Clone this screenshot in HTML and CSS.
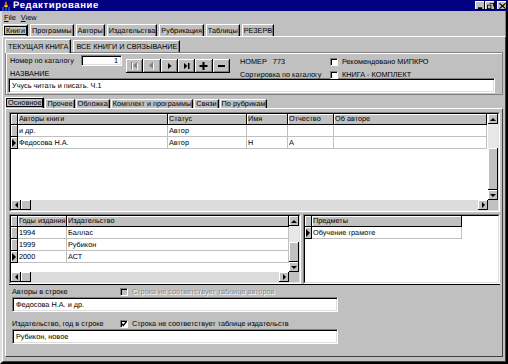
FILE: index.html
```html
<!DOCTYPE html>
<html lang="ru">
<head>
    <meta charset="UTF-8">
    <title>Редактирование</title>
    <link rel="stylesheet" href="styles.css">
</head>
<body>
<div class="window">
    <!-- заголовок окна -->
    <div class="titlebar">
        <svg class="app-icon" viewBox="0 0 10 10">
            <path d="M1 10V6h2v4zM4 10V5h2v5zM7 10V6h2v4z" fill="#2040c0"/>
            <path d="M3 6l2-6 2 6z" fill="#ffc800"/>
            <path d="M4 4l1-3 1 3z" fill="#e02000"/>
        </svg>
        <span class="title">Редактирование</span>
        <div class="caption-btns">
            <span class="cbtn"><svg viewBox="0 0 8 7"><path d="M1 5h5v2H1z"/></svg></span>
            <span class="cbtn"><svg viewBox="0 0 8 7"><path d="M3 0h5v4H7V1H3zM0 2h5v5H0zm1 1v3h3V3z" fill-rule="evenodd"/></svg></span>
            <span class="cbtn close"><svg viewBox="0 0 8 7"><path d="M1 0l3 2.5L7 0l1 1-3 2.5L8 6l-1 1-3-2.5L1 7 0 6l3-2.5L0 1z"/></svg></span>
        </div>
    </div>

    <div class="frame">
        <div class="menubar">
            <span><u>F</u>ile</span>
            <span><u>V</u>iew</span>
        </div>

        <div class="tabs tabs-main">
            <span class="tab active"><span class="focus">Книги</span></span>
            <span class="tab">Программы</span>
            <span class="tab">Авторы</span>
            <span class="tab">Издательства</span>
            <span class="tab">Рубрикация</span>
            <span class="tab">Таблицы</span>
            <span class="tab">РЕЗЕРВ</span>
        </div>

        <div class="sheet sheet-main">
            <div class="tabs tabs-sub">
                <span class="tab active">ТЕКУЩАЯ КНИГА</span>
                <span class="tab">ВСЕ КНИГИ И СВЯЗЫВАНИЕ</span>
            </div>

            <!-- карточка книги -->
            <div class="info">
                <div class="info-top">
                    <div class="catalog">
                        <div class="catalog-line">
                            <span class="lbl">Номер по каталогу</span>
                            <span class="edit num-edit">1</span>
                        </div>
                        <div class="caps-lbl">НАЗВАНИЕ</div>
                    </div>
                    <div class="nav">
                        <span class="nbtn"><svg viewBox="0 0 9 8"><path d="M2 1h1v7H2zM8 1v7L4 4.5z" fill="#fff"/><path d="M1 0h1v7H1zM7 0v7L3 3.5z" fill="#808080"/></svg></span>
                        <span class="nbtn"><svg viewBox="0 0 9 8"><path d="M7 1v7L3 4.5z" fill="#fff"/><path d="M6 0v7L2 3.5z" fill="#808080"/></svg></span>
                        <span class="nbtn"><svg viewBox="0 0 9 8"><path d="M3 1v6l3.5-3z"/></svg></span>
                        <span class="nbtn"><svg viewBox="0 0 9 8"><path d="M2 1v6l3.5-3zM6 1h1.5v6H6z"/></svg></span>
                        <span class="nbtn"><svg viewBox="0 0 9 8"><path d="M3.5 0h2v3H8.5v2h-3v3h-2V5h-3V3h3z"/></svg></span>
                        <span class="nbtn"><svg viewBox="0 0 9 8"><path d="M1 3h7v2H1z"/></svg></span>
                    </div>
                    <div class="number">
                        <div>НОМЕР&nbsp;&nbsp;&nbsp;773</div>
                        <div>Сортировка по каталогу</div>
                    </div>
                    <div class="checks">
                        <label class="check"><span class="box"></span>Рекомендовано МИПКРО</label>
                        <label class="check"><span class="box"></span>КНИГА - КОМПЛЕКТ</label>
                    </div>
                </div>
                <div class="edit name-edit">Учусь читать и писать. Ч.1</div>
            </div>

            <div class="tabs tabs-inner">
                <span class="tab active"><span class="focus">Основное</span></span>
                <span class="tab">Прочее</span>
                <span class="tab">Обложка</span>
                <span class="tab">Комплект и программы</span>
                <span class="tab">Связи</span>
                <span class="tab">По рубрикам</span>
            </div>

            <div class="sheet sheet-inner">
                <!-- авторы -->
                <div class="grid authors">
                    <div class="grid-in">
                        <div class="grid-main">
                            <div class="cells">
                                <div class="row head"><span class="ind"></span><span>Авторы книги</span><span>Статус</span><span>Имя</span><span>Отчество</span><span>Об авторе</span></div>
                                <div class="row"><span class="ind"></span><span>и др.</span><span>Автор</span><span></span><span></span><span></span></div>
                                <div class="row"><span class="ind cur"></span><span>Федосова Н.А.</span><span>Автор</span><span>Н</span><span>А</span><span></span></div>
                            </div>
                            <div class="vscroll">
                                <span class="sbtn"><i class="arr up"></i></span>
                                <span class="track"></span>
                                <span class="thumb"></span>
                                <span class="sbtn"><i class="arr down"></i></span>
                            </div>
                        </div>
                        <div class="hscroll">
                            <span class="sbtn"><i class="arr left"></i></span>
                            <span class="thumb"></span>
                            <span class="track"></span>
                            <span class="sbtn"><i class="arr right"></i></span>
                            <span class="corner"></span>
                        </div>
                    </div>
                </div>

                <div class="split">
                    <!-- издания -->
                    <div class="grid years">
                        <div class="grid-in">
                            <div class="grid-main">
                                <div class="cells">
                                    <div class="row head"><span class="ind"></span><span>Годы издания</span><span>Издательство</span></div>
                                    <div class="row"><span class="ind"></span><span>1994</span><span>Баллас</span></div>
                                    <div class="row"><span class="ind"></span><span>1999</span><span>Рубикон</span></div>
                                    <div class="row"><span class="ind cur"></span><span>2000</span><span>АСТ</span></div>
                                </div>
                                <div class="vscroll">
                                    <span class="sbtn"><i class="arr up"></i></span>
                                    <span class="track short"></span>
                                    <span class="thumb"></span>
                                    <span class="sbtn"><i class="arr down"></i></span>
                                </div>
                            </div>
                            <div class="hscroll">
                                <span class="sbtn"><i class="arr left"></i></span>
                                <span class="thumb"></span>
                                <span class="track"></span>
                                <span class="sbtn"><i class="arr right"></i></span>
                                <span class="corner"></span>
                            </div>
                        </div>
                    </div>

                    <!-- рубрики -->
                    <div class="grid subjects">
                        <div class="grid-in">
                            <div class="cells">
                                <div class="row head"><span class="ind"></span><span>Предметы</span></div>
                                <div class="row"><span class="ind cur"></span><span>Обучение грамоте</span></div>
                            </div>
                        </div>
                    </div>
                </div>

                <div class="strings">
                    <div class="field-head">
                        <span class="lbl">Авторы в строке</span>
                        <label class="check off"><span class="box"></span>Строка не соответствует таблице авторов</label>
                    </div>
                    <div class="edit field-edit">Федосова Н.А. и др.</div>
                    <div class="field-head second">
                        <span class="lbl">Издательство, год в строке</span>
                        <label class="check"><span class="box"><svg viewBox="0 0 6 6"><path d="M0.5 2.5l1.8 2 3.2-4" fill="none" stroke="#000" stroke-width="1.4"/></svg></span>Строка не соответствует таблице издательств</label>
                    </div>
                    <div class="edit field-edit">Рубикон, новое</div>
                </div>
            </div>
        </div>
    </div>
</div>
</body>
</html>
```

FILE: styles.css
```css
* { box-sizing: border-box; }
body { margin: 0; background: #c0c0c0; color: #000; font: 7.3px "Liberation Sans", Arial, sans-serif; text-rendering: geometricPrecision; }

.window { width: 508px; height: 364px; display: flex; flex-direction: column; overflow: hidden; background: #c0c0c0; }

/* title bar */
.titlebar { flex: none; height: 11px; display: flex; align-items: center; background: #000080; color: #fff; }
.app-icon { width: 10px; height: 10px; margin: 0 2px 0 1px; }
.title { flex: 1; font-size: 9.5px; font-weight: bold; letter-spacing: 0.6px; line-height: 11px; }
.caption-btns { display: flex; margin-right: 1px; }
.cbtn { width: 10px; height: 9px; display: flex; align-items: center; justify-content: center; background: #c0c0c0; box-shadow: inset -1px -1px #000, inset 1px 1px #fff; }
.cbtn svg { width: 7px; height: 6px; }
.cbtn.close { margin-left: 2px; }

.frame { flex: 1; display: flex; flex-direction: column; min-height: 0; border: 2px solid #dfdfdf; border-top: 0; border-right-color: #000; border-bottom-color: #000; box-shadow: inset -1px -1px #808080; }

.menubar { flex: none; height: 12px; display: flex; align-items: center; gap: 5px; padding-left: 2px; }

/* tabs */
.tabs { flex: none; display: flex; align-items: flex-end; gap: 2px; }
.tab { height: 10px; padding: 0 1px; border: 1px solid #fff; border-right-color: #000; border-bottom: 0; box-shadow: inset -1px 0 #808080; line-height: 9px; white-space: nowrap; background: #c0c0c0; }
.tab.active { position: relative; z-index: 1; }
.focus { display: inline-block; border: 1px solid #000; padding: 0 1px; line-height: 7px; }

.tabs-main { height: 13px; padding-left: 1px; }
.tabs-main .tab { height: 12px; line-height: 11px; }
.tabs-main .tab.active { padding: 0; }
.tabs-sub { height: 14px; }
.tabs-sub .tab { height: 12px; line-height: 11px; padding: 0 2px; }
.tabs-sub .tab.active { height: 14px; margin-bottom: -1px; line-height: 13px; }
.tabs-inner { height: 11px; margin-top: 2px; gap: 1px; }
.tabs-inner .tab { height: 9px; line-height: 8px; }
.tabs-inner .tab.active { height: 11px; padding: 0; line-height: 10px; }

.sheet { border: 1px solid #fff; border-right-color: #404040; border-bottom-color: #404040; }
.sheet-main { flex: 1; display: flex; flex-direction: column; min-height: 0; padding: 1px 2px 4px; }
.sheet-inner { flex: 1; display: flex; flex-direction: column; min-height: 0; padding: 3px 2px 0 3px; }

/* edits and checkboxes */
.edit { display: block; background: #fff; border: 1px solid; border-color: #808080 #fff #fff #808080; box-shadow: inset 1px 1px #000, inset -1px -1px #dfdfdf; padding-left: 3px; white-space: nowrap; }
.check { display: flex; align-items: center; gap: 4px; height: 9px; white-space: nowrap; }
.box { flex: none; width: 8px; height: 8px; background: #fff; border: 1px solid; border-color: #808080 #fff #fff #808080; box-shadow: inset 1px 1px #000; display: flex; align-items: center; justify-content: center; }
.box svg { width: 6px; height: 6px; }
.check.off { color: #8a8a8a; text-shadow: 1px 1px #fff; }
.check.off .box { background: #c0c0c0; }

/* book card */
.info { flex: none; height: 43px; border: 1px solid #808080; box-shadow: inset 1px 1px #fff; padding: 2px 7px 0 2px; }
.info-top { display: flex; height: 23px; }
.catalog { width: 114px; }
.catalog-line { display: flex; align-items: center; height: 11px; }
.catalog .lbl { width: 73px; padding-left: 2px; }
.num-edit { width: 41px; height: 11px; line-height: 9px; text-align: right; padding-right: 3px; }
.caps-lbl { margin-top: 4px; padding-left: 2px; line-height: 8px; }
.nav { display: grid; grid-template-columns: repeat(6, 1fr); width: 104px; height: 14px; margin: 4px 0 0 4px; }
.nbtn { display: flex; align-items: center; justify-content: center; background: #c0c0c0; box-shadow: inset -1px -1px #000, inset 1px 1px #fff, inset -2px -2px #808080; }
.nbtn svg { width: 9px; height: 8px; }
.number { width: 90px; margin-left: 10px; padding-top: 3px; display: flex; flex-direction: column; gap: 5px; line-height: 8px; }
.checks { padding-top: 2px; display: flex; flex-direction: column; gap: 4px; }
.name-edit { height: 15px; line-height: 13px; }

/* grids */
.grid { flex: none; display: flex; background: #fff; border: 1px solid; border-color: #808080 #fff #fff #808080; }
.grid-in { flex: 1; display: flex; flex-direction: column; min-width: 0; border: 1px solid; border-color: #000 #dfdfdf #dfdfdf #000; }
.grid-main { flex: 1; display: flex; min-height: 0; }
.cells { flex: 1; overflow: hidden; }
.row { display: grid; height: 12px; }
.row > span { border-right: 1px solid #c0c0c0; border-bottom: 1px solid #c0c0c0; padding-left: 1px; line-height: 11px; white-space: nowrap; overflow: hidden; }
.row.head { height: 11px; }
.row.head > span { background: #c0c0c0; border-color: #000; box-shadow: inset 1px 1px #fff; line-height: 10px; }
.row > .ind { background: #c0c0c0; border-color: #000; box-shadow: inset 1px 1px #fff; padding: 0; display: flex; align-items: center; justify-content: center; }
.ind.cur::before { content: ""; border-top: 4px solid transparent; border-bottom: 4px solid transparent; border-left: 4px solid #000; }

.authors { height: 100px; }
.authors .row { grid-template-columns: 7px 150px 79px 41px 46px 153px; }
.split { flex: none; display: flex; gap: 2px; height: 70px; margin-top: 2px; }
.split .grid { height: 70px; }
.years { width: 292px; }
.years .row { grid-template-columns: 7px 49px 222px; }
.subjects { flex: 1; }
.subjects .row { grid-template-columns: 7px 150px; }

/* scrollbars */
.vscroll { flex: none; width: 10px; display: flex; flex-direction: column; background: #e8e8e8; }
.hscroll { flex: none; height: 10px; display: flex; background: #dcdcdc; }
.sbtn { flex: none; width: 10px; height: 10px; display: flex; align-items: center; justify-content: center; background: #c0c0c0; box-shadow: inset -1px -1px #000, inset 1px 1px #fff; }
.vscroll .track { height: 24px; flex: none; }
.vscroll .track.short { height: 16px; }
.vscroll .thumb { flex: 1; }
.hscroll .thumb { flex: none; width: 10px; }
.hscroll .track { flex: 1; }
.thumb { background: #c0c0c0; box-shadow: inset -1px -1px #000, inset 1px 1px #fff; }
.corner { flex: none; width: 10px; background: #c0c0c0; }
.arr { width: 0; height: 0; border: 3px solid transparent; }
.arr.up { border-top: 0; border-bottom-color: #000; }
.arr.down { border-bottom: 0; border-top-color: #000; }
.arr.left { border-left: 0; border-right-color: #000; }
.arr.right { border-right: 0; border-left-color: #000; }

/* strings at the bottom */
.strings { flex: 1; border-top: 1px solid #000; padding: 1px 0 0 3px; }
.field-head { display: flex; align-items: center; height: 11px; }
.field-head .lbl { width: 108px; }
.field-head.second { margin-top: 6px; }
.field-edit { width: 326px; height: 15px; line-height: 13px; }
```
